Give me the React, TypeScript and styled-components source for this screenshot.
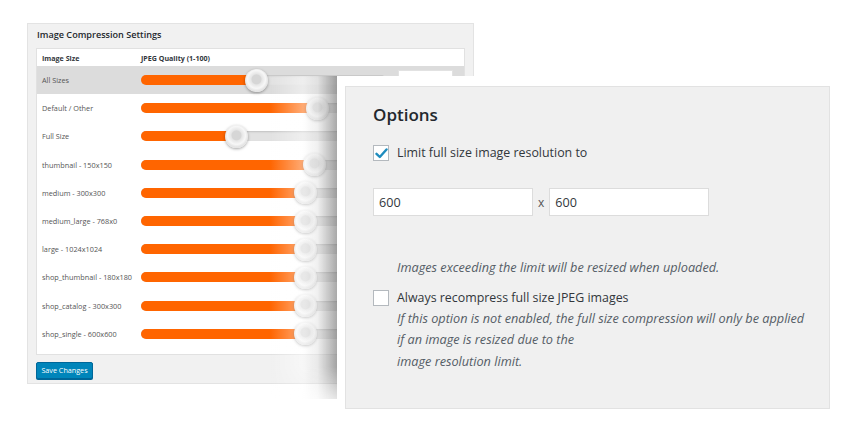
import React from "react";
import styled, { createGlobalStyle } from "styled-components";

const Global = createGlobalStyle`
  html, body { margin: 0; padding: 0; background: #fff; }
  body { font-family: "Open Sans", "Noto Sans", sans-serif; }
`;

const Stage = styled.div`
  position: relative;
  width: 847px;
  height: 431px;
  overflow: hidden;
  background: #fff;
`;

const SettingsPanel = styled.section`
  box-sizing: border-box;
  margin: 23px 0 0 27px;
  width: 447px;
  height: 361px;
  background: #f1f1f1;
  border: 1px solid #e3e3e3;
  padding: 4px 8px 0 8px;
  display: flex;
  flex-direction: column;
`;

const PanelTitle = styled.h2`
  margin: 0 0 7px 1px;
  font-size: 9.1px;
  font-weight: 600;
  color: #23282d;
  line-height: 13px;
`;

const SizeTable = styled.div`
  background: #fff;
  border: 1px solid #e1e1e1;
  padding-bottom: 6px;
`;

const HeaderRow = styled.div`
  display: grid;
  grid-template-columns: 99px 1fr;
  height: 17px;
  align-items: center;
  font-size: 7.1px;
  font-weight: 700;
  color: #32373c;
  padding-left: 5px;
`;

const SizeRow = styled.div<{ $active?: boolean }>`
  display: grid;
  grid-template-columns: 99px 245px 1fr;
  align-items: center;
  height: 28.2px;
  padding-left: 5px;
  background: ${(p) => (p.$active ? "#dcdcdc" : "transparent")};
`;

const SizeLabel = styled.span`
  font-size: 7.3px;
  color: #555;
  white-space: nowrap;
`;

const Track = styled.div`
  position: relative;
  height: 10px;
  border-radius: 6px;
  background: #e2e2e2;
  box-shadow: inset 0 1px 2px rgba(0, 0, 0, 0.15);
`;

const Fill = styled.div`
  position: absolute;
  left: 0;
  top: 0;
  bottom: 0;
  border-radius: 6px 0 0 6px;
  background: #ff6500;
`;

const Knob = styled.div`
  position: absolute;
  top: 50%;
  width: 23px;
  height: 23px;
  margin: -11.5px 0 0 -11.5px;
  border-radius: 50%;
  background: radial-gradient(circle at 50% 45%, #d6d6d6 0 4.5px, #e6e6e6 5.5px, #f7f7f7 9px, #e4e4e4 11.5px);
  box-shadow: 0 1px 3px rgba(0, 0, 0, 0.35);
`;

const QualityInput = styled.div`
  margin-left: 12px;
  width: 55px;
  height: 20px;
  background: #fff;
  border: 1px solid #e2e2e2;
  box-sizing: border-box;
`;

const SaveButton = styled.button`
  margin-top: 7px;
  align-self: flex-start;
  width: 57px;
  height: 17px;
  padding: 0;
  border: 1px solid #006799;
  border-radius: 2px;
  background: #0085ba;
  color: #fff;
  font-family: inherit;
  font-size: 7.2px;
  box-shadow: 0 1px 0 #006799;
`;

const Shade = styled.div`
  position: absolute;
  left: 215px;
  top: 76px;
  width: 122px;
  height: 323px;
  background:
    linear-gradient(to right, rgba(255, 255, 255, 0) 0%, rgba(255, 255, 255, 0) 45%, rgba(255, 255, 255, 0.45) 72%, rgba(225, 225, 225, 0.5) 84%, rgba(110, 110, 110, 0.6) 100%);
  -webkit-mask-image: linear-gradient(to bottom, #000 90%, rgba(0, 0, 0, 0.3) 100%);
`;

const OptionsFrame = styled.div`
  position: absolute;
  left: 337px;
  top: 76px;
  width: 510px;
  height: 355px;
  background: #fff;
  padding: 10px 0 0 8px;
  box-sizing: border-box;
`;

const OptionsPanel = styled.div`
  box-sizing: border-box;
  width: 485px;
  height: 323px;
  background: #f0f0f0;
  border: 1px solid #e2e2e2;
  padding: 16px 0 0 27px;
  font-family: "Open Sans", "Noto Sans", sans-serif;
  color: #32373c;
`;

const OptionsTitle = styled.h3`
  margin: 0 0 16px 0;
  font-size: 17px;
  font-weight: 600;
  line-height: 24px;
  color: #23282d;
`;

const CheckRow = styled.label<{ $top?: number }>`
  display: flex;
  align-items: center;
  gap: 8px;
  margin-top: ${(p) => p.$top ?? 0}px;
  font-size: 12.4px;
  line-height: 20px;
  color: #32373c;
`;

const Box = styled.span`
  box-sizing: border-box;
  width: 16px;
  height: 16px;
  border: 1px solid #b4b9be;
  background: #fff;
  display: inline-flex;
  align-items: center;
  justify-content: center;
  flex: none;
`;

const SizeInputs = styled.div`
  display: flex;
  align-items: center;
  margin-top: 25px;
  gap: 5px;
  font-size: 12px;
  color: #555;
`;

const NumberBox = styled.div`
  box-sizing: border-box;
  width: 160px;
  height: 28px;
  background: #fff;
  border: 1px solid #dcdcdc;
  padding-left: 5px;
  display: flex;
  align-items: center;
  font-size: 12.6px;
  color: #32373c;
`;

const Note = styled.p<{ $top?: number }>`
  margin: ${(p) => p.$top ?? 0}px 0 0 24px;
  font-size: 12.7px;
  font-style: italic;
  line-height: 21.6px;
  color: #555d66;
`;

const sizes: { label: string; value: number }[] = [
  { label: "All Sizes", value: 47 },
  { label: "Default / Other", value: 72 },
  { label: "Full Size", value: 39 },
  { label: "thumbnail - 150x150", value: 71 },
  { label: "medium - 300x300", value: 67 },
  { label: "medium_large - 768x0", value: 67 },
  { label: "large - 1024x1024", value: 67 },
  { label: "shop_thumbnail - 180x180", value: 67 },
  { label: "shop_catalog - 300x300", value: 67 },
  { label: "shop_single - 600x600", value: 67 },
];

function Check() {
  return (
    <svg width="13" height="11" viewBox="0 0 13 11">
      <path d="M1.5 5.8 L4.8 9 L11.5 1.5" fill="none" stroke="#1e8cbe" strokeWidth="2.4" strokeLinecap="round" strokeLinejoin="round" />
    </svg>
  );
}

export default function App() {
  return (
    <Stage>
      <Global />
      <SettingsPanel>
        <PanelTitle>Image Compression Settings</PanelTitle>
        <SizeTable>
          <HeaderRow>
            <span>Image Size</span>
            <span>JPEG Quality (1-100)</span>
          </HeaderRow>
          {sizes.map((s, i) => (
            <SizeRow key={s.label} $active={i === 0}>
              <SizeLabel>{s.label}</SizeLabel>
              <Track>
                <Fill style={{ width: `${s.value}%` }} />
                <Knob style={{ left: `${s.value}%` }} />
              </Track>
              <QualityInput />
            </SizeRow>
          ))}
        </SizeTable>
        <SaveButton>Save Changes</SaveButton>
      </SettingsPanel>
      <Shade />
      <OptionsFrame>
        <OptionsPanel>
          <OptionsTitle>Options</OptionsTitle>
          <CheckRow>
            <Box>
              <Check />
            </Box>
            Limit full size image resolution to
          </CheckRow>
          <SizeInputs>
            <NumberBox>600</NumberBox>
            x
            <NumberBox>600</NumberBox>
          </SizeInputs>
          <Note $top={41}>Images exceeding the limit will be resized when uploaded.</Note>
          <CheckRow $top={9}>
            <Box />
            Always recompress full size JPEG images
          </CheckRow>
          <Note>
            If this option is not enabled, the full size compression will only be applied
            <br />
            if an image is resized due to the
            <br />
            image resolution limit.
          </Note>
        </OptionsPanel>
      </OptionsFrame>
    </Stage>
  );
}
